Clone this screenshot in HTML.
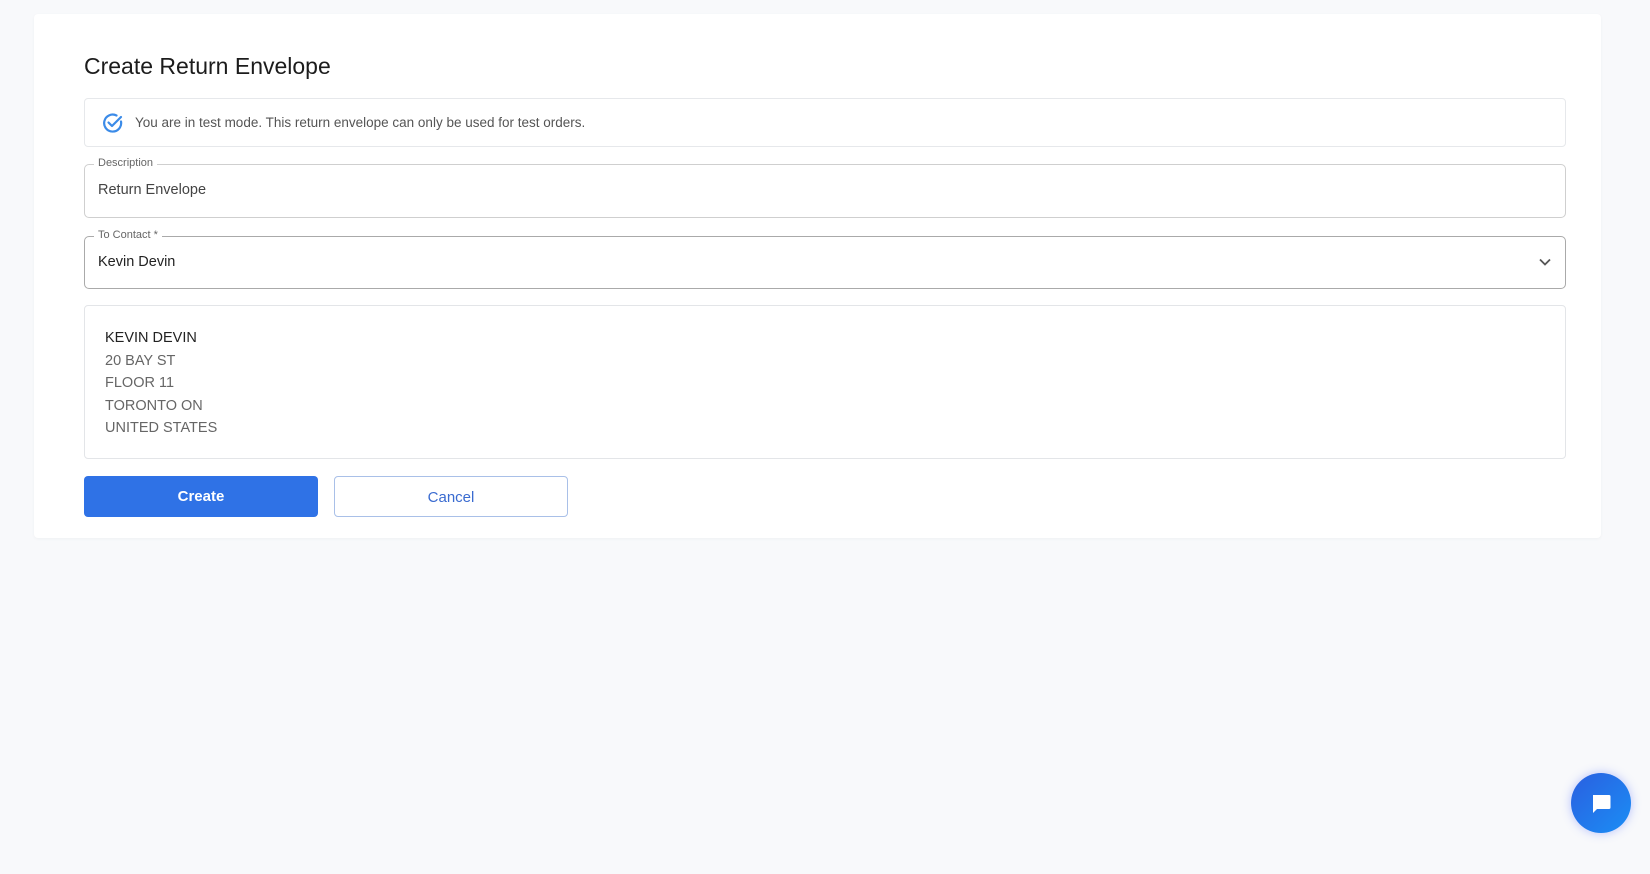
<!DOCTYPE html>
<html><head><meta charset="utf-8"><style>
*{box-sizing:border-box;margin:0;padding:0}
body{width:1650px;height:874px;background:#f8f9fb;font-family:"Liberation Sans",Arial,sans-serif;position:relative;overflow:hidden}
.card{position:absolute;left:34px;top:14px;width:1567px;height:524px;background:#fff;border-radius:4px;box-shadow:0 1px 3px rgba(0,0,0,0.04)}
h1{position:absolute;left:84px;top:53px;font-size:23px;font-weight:400;color:#1c1c1c}
.alert{position:absolute;left:84px;top:98px;width:1482px;height:49px;border:1px solid #e6e8eb;border-radius:4px}
.alert svg{position:absolute;left:17px;top:13px}
.alert span{position:absolute;left:50px;top:16px;font-size:13.5px;color:#555}
.field{position:absolute;left:84px;width:1482px;border:1px solid #cfcfcf;border-radius:5px}
.field label{position:absolute;left:9px;top:-8px;background:#fff;padding:0 4px;font-size:11px;color:#666}
.field .v{position:absolute;left:13px;font-size:14.5px}
.addr{position:absolute;left:84px;top:305px;width:1482px;height:154px;border:1px solid #e3e5e8;border-radius:4px;padding:21px 0 0 20px;font-size:14.5px;line-height:22.5px;color:#666}
.btn{position:absolute;top:476px;height:41px;width:234px;border-radius:4px;font-size:15px;text-align:center;line-height:41px}
.chat{position:absolute;left:1571px;top:773px;width:60px;height:60px;border-radius:50%;background:linear-gradient(135deg,#2a5fe0,#1b8ef5);box-shadow:0 0 10px rgba(60,90,255,0.35)}
</style></head><body>
<div class="card"></div>
<h1>Create Return Envelope</h1>
<div class="alert">
<svg width="22" height="22" viewBox="0 0 22 22"><path d="M19 9.5A8.5 8.5 0 1 1 14.5 3.5" fill="none" stroke="#3b8be8" stroke-width="2.2" stroke-linecap="round"/><path d="M6.5 10.5l3.5 3.5 9-9" fill="none" stroke="#3b8be8" stroke-width="2.2" stroke-linecap="round" stroke-linejoin="round"/></svg>
<span>You are in test mode. This return envelope can only be used for test orders.</span></div>
<div class="field" style="top:164px;height:54px"><label>Description</label><div class="v" style="top:17px;color:#444">Return Envelope</div></div>
<div class="field" style="top:236px;height:53px;border-color:#aaa"><label>To Contact *</label><div class="v" style="top:17px;color:#222">Kevin Devin</div>
<svg style="position:absolute;right:14px;top:21px" width="12" height="8" viewBox="0 0 12 8"><path d="M1 1.5l5 5 5-5" fill="none" stroke="#555" stroke-width="1.8"/></svg></div>
<div class="addr"><div style="color:#222">KEVIN DEVIN</div><div>20 BAY ST</div><div>FLOOR 11</div><div>TORONTO ON</div><div>UNITED STATES</div></div>
<div class="btn" style="left:84px;background:#2f72e6;color:#fff;font-weight:bold">Create</div>
<div class="btn" style="left:334px;border:1px solid #a9c0e8;color:#3a6bd0;background:#fff">Cancel</div>
<div class="chat"><svg style="position:absolute;left:19px;top:20px" width="22" height="22" viewBox="0 0 22 22"><path d="M3 2h16a1.5 1.5 0 0 1 1.5 1.5v11a1.5 1.5 0 0 1-1.5 1.5H7l-4 4z" fill="#fff"/></svg></div>
</body></html>
